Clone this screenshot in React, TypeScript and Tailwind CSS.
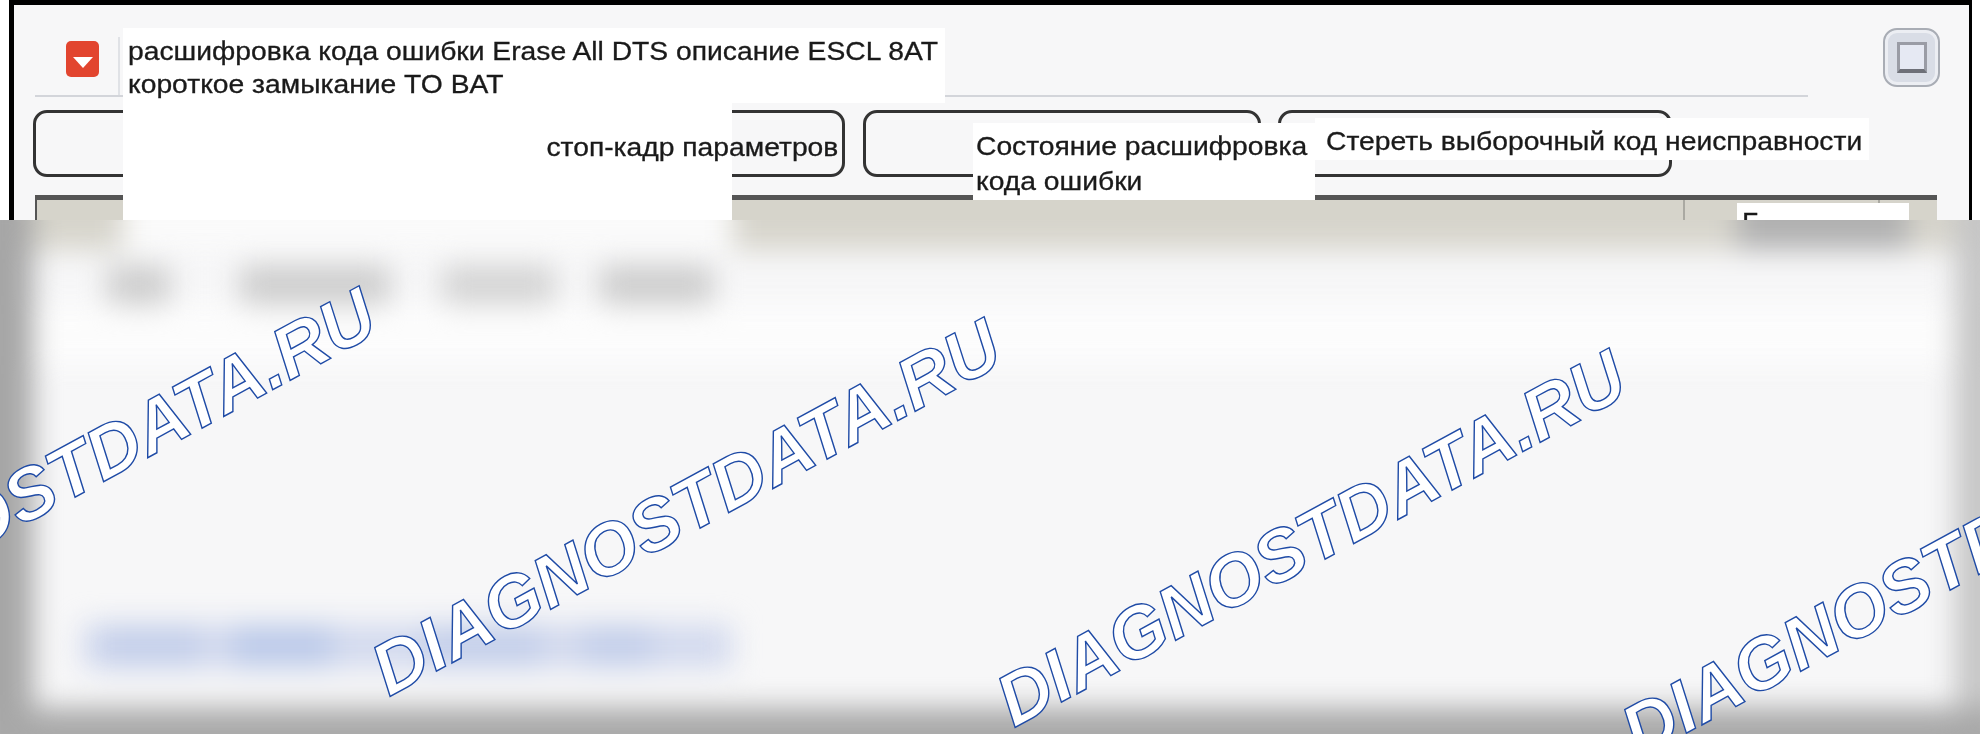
const font = "font-['Liberation_Sans',Arial,sans-serif]";

function Watermark({ className }: { className: string }) {
  return (
    <div
      className={`absolute origin-[0_62px] -rotate-[28.5deg] whitespace-nowrap text-[73px] leading-none font-bold italic text-white [-webkit-text-stroke:1.4px_#1f4ba6] ${font} ${className}`}
    >
      DIAGNOSTDATA.RU
    </div>
  );
}

function ToolButton({ className }: { className: string }) {
  return <div className={`h-[67px] rounded-[14px] border-[3px] border-[#333] blur-[0.5px] ${className}`} />;
}

// The labels in the picture are stretched sideways, so they get a small x scale
function Label({ children, right }: { children: string; right?: boolean }) {
  return (
    <p
      className={`w-max scale-x-[1.13] whitespace-nowrap blur-[0.7px] [-webkit-text-stroke:0.3px_#1a1a1a] ${right ? "ml-auto origin-right" : "origin-left"}`}
    >
      {children}
    </p>
  );
}

function UpperWindow() {
  return (
    <div className="relative h-[220px] overflow-hidden bg-white pr-[8px] pl-[9px]">
      <div className="h-full border-t-[5px] border-r-[3px] border-l-[5px] border-black bg-[#f7f7f8]">
        {/* Header row with the error icon and the maximise button */}
        <div className="flex h-[92px] items-start">
          <div className="ml-[21px] flex h-full w-[1773px] items-start border-b-2 border-[#d3d5da] pl-[31px]">
            <svg className="mt-[36px] h-[36px] w-[33px] blur-[0.7px]" viewBox="0 0 33 36">
              <rect width="33" height="36" rx="5" fill="#e2452f" />
              <polygon points="7,16 27,16 17,27" fill="#fff" />
            </svg>
            <div className="mt-[32px] ml-[19px] h-[58px] w-[2px] bg-[#e0e2e6]" />
          </div>
          <div className="mt-[23px] ml-[75px] flex h-[59px] w-[57px] items-center justify-center rounded-[14px] border-2 border-[#a9adb5] bg-[#d9dde6] shadow-[inset_0_0_0_3px_#eceef3] blur-[0.6px]">
            <div className="h-[31px] w-[30px] border-[3px] border-b-4 border-[#9a9ca5] border-b-[#6e7078] bg-[#e6e9f3]" />
          </div>
        </div>

        {/* Tool buttons */}
        <div className="mt-[13px] ml-[19px] flex">
          <ToolButton className="w-[812px]" />
          <ToolButton className="ml-[18px] w-[398px]" />
          <ToolButton className="ml-[17px] w-[394px]" />
        </div>

        {/* Table header, the rest is cut off by the blurred part */}
        <div className="mt-[18px] ml-[21px] flex h-[40px] w-[1902px] border-t-[5px] border-l-2 border-[#555] bg-[#d6d4cb]">
          <div className="w-[1648px] border-r-2 border-[#aaa9a2]" />
          <div className="h-[8px] w-[195px] border-r-2 border-[#aaa9a2]" />
        </div>
      </div>

      {/* White patches with the translated labels */}
      <div className={`absolute top-[28px] left-[123px] h-[75px] w-[822px] bg-white pt-[7px] pl-[5px] text-[25px] leading-[33px] text-[#1a1a1a] ${font}`}>
        <Label>расшифровка кода ошибки Erase All DTS описание ESCL 8AT</Label>
        <Label>короткое замыкание TO BAT</Label>
      </div>
      <div className={`absolute top-[103px] left-[123px] h-[117px] w-[609px] bg-white pt-[28px] text-[25px] leading-[33px] text-[#1a1a1a] ${font}`}>
        <div className="w-[715px]">
          <Label right>стоп-кадр параметров</Label>
        </div>
      </div>
      <div className={`absolute top-[123px] left-[973px] h-[77px] w-[342px] bg-white pt-[6px] pl-[3px] text-[25px] leading-[35px] text-[#1a1a1a] ${font}`}>
        <Label>Состояние расшифровка</Label>
        <Label>кода ошибки</Label>
      </div>
      <div className={`absolute top-[118px] left-[1315px] h-[42px] w-[554px] bg-white pt-[7px] pl-[11px] text-[25px] leading-[33px] text-[#1a1a1a] ${font}`}>
        <Label>Стереть выборочный код неисправности</Label>
      </div>
      <div className={`absolute top-[203px] left-[1737px] h-[40px] w-[172px] bg-white pt-[7px] pl-[5px] text-[25px] leading-none text-[#1a1a1a] ${font}`}>
        <Label>Б</Label>
      </div>
    </div>
  );
}

function LowerBlur() {
  return (
    <div className="h-[514px] overflow-hidden bg-[#f7f7f8]">
      <div className="-mx-[30px] -mt-[30px] flex h-[574px] flex-col blur-[14px]">
        <div className="flex flex-1">
          <div className="w-[63px] bg-[#a6a6a6]" />
          <div className="flex flex-1 flex-col">
            {/* Table header as it runs on below the cut */}
            <div className="flex h-[60px] shrink-0">
              <div className="w-[90px] bg-[#d6d4cb]" />
              <div className="w-[610px] bg-[#fafafa]" />
              <div className="flex-1 bg-[#d6d4cb]" />
              <div className="w-[172px] bg-[#b0b0b0]" />
              <div className="w-[46px] bg-[#d6d4cb]" />
            </div>
            {/* Blurred table row */}
            <div className="mt-[15px] flex h-[40px] shrink-0">
              <div className="ml-[74px] w-[63px] bg-[#cdcdcd]" />
              <div className="ml-[70px] w-[150px] bg-[#cdcdcd]" />
              <div className="ml-[52px] w-[113px] bg-[#d4d4d4]" />
              <div className="ml-[45px] w-[113px] bg-[#cdcdcd]" />
            </div>
            <div className="h-[60px] shrink-0 bg-[#fcfcfc]" />
            <div className="flex-1" />
            {/* Blurred link line */}
            <div className="ml-[49px] flex h-[44px] w-[650px] shrink-0 bg-[#d3daee]">
              <div className="ml-[20px] w-[100px] bg-[#c4cfea]" />
              <div className="ml-[30px] w-[100px] bg-[#bccae9]" />
              <div className="ml-[90px] w-[120px] bg-[#c4cfea]" />
              <div className="ml-[40px] w-[70px] bg-[#c4cfea]" />
            </div>
            <div className="h-[40px] shrink-0" />
          </div>
          <div className="w-[55px] bg-[#c6c6c6]" />
        </div>
        <div className="h-[56px] shrink-0 bg-[#a8a8a8]" />
      </div>
    </div>
  );
}

export default function App() {
  return (
    <div className="relative h-[734px] w-[1980px] overflow-hidden bg-white">
      <UpperWindow />
      <LowerBlur />

      <Watermark className="top-[604px] left-[-236px]" />
      <Watermark className="top-[635px] left-[389px]" />
      <Watermark className="top-[666px] left-[1014px]" />
      <Watermark className="top-[697px] left-[1639px]" />
    </div>
  );
}
